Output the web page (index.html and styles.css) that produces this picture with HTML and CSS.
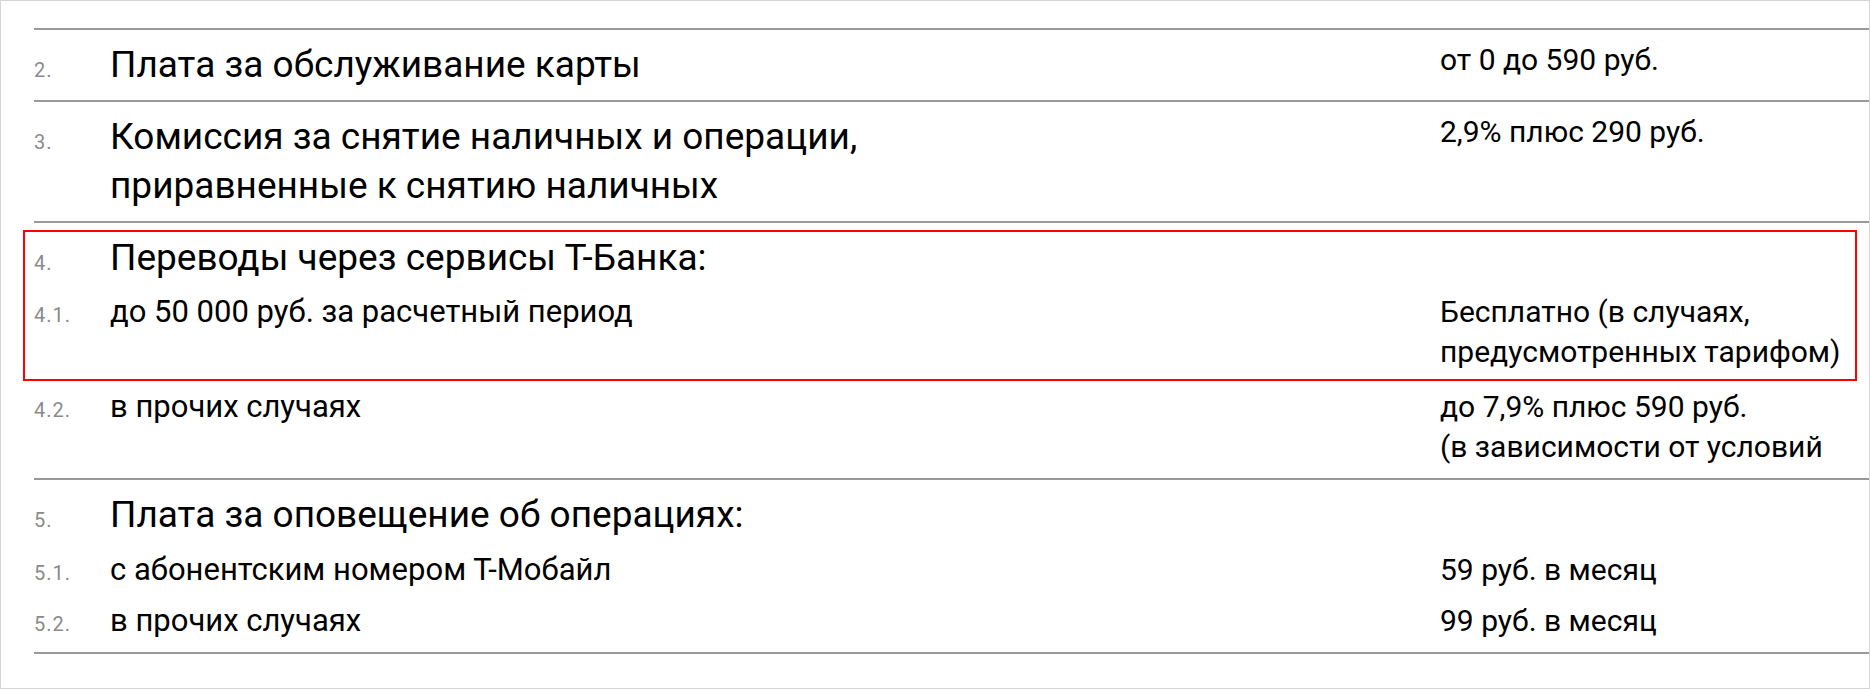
FILE: index.html
```html
<!DOCTYPE html>
<html lang="ru">
<head>
<meta charset="utf-8">
<link rel="stylesheet" href="styles.css">
</head>
<body>
<div class="frame">
  <div class="list">
    <section class="sec">
      <div class="row">
        <span class="num">2.</span>
        <span class="title">Плата за обслуживание карты</span>
        <span class="val">от 0 до 590 руб.</span>
      </div>
    </section>
    <section class="sec">
      <div class="row">
        <span class="num">3.</span>
        <span class="title">Комиссия за снятие наличных и операции,<br>приравненные к снятию наличных</span>
        <span class="val">2,9% плюс 290 руб.</span>
      </div>
    </section>
    <section class="sec">
      <div class="highlight">
        <div class="row">
          <span class="num">4.</span>
          <span class="title">Переводы через сервисы Т-Банка:</span>
          <span class="val"></span>
        </div>
        <div class="row sub">
          <span class="num">4.1.</span>
          <span class="text">до 50 000 руб. за расчетный период</span>
          <span class="val">Бесплатно (в случаях,<br>предусмотренных тарифом)</span>
        </div>
      </div>
      <div class="row sub">
        <span class="num">4.2.</span>
        <span class="text">в прочих случаях</span>
        <span class="val">до 7,9% плюс 590 руб.<br>(в зависимости от условий</span>
      </div>
    </section>
    <section class="sec">
      <div class="row">
        <span class="num">5.</span>
        <span class="title">Плата за оповещение об операциях:</span>
        <span class="val"></span>
      </div>
      <div class="row sub">
        <span class="num">5.1.</span>
        <span class="text">с абонентским номером Т-Мобайл</span>
        <span class="val">59 руб. в месяц</span>
      </div>
      <div class="row sub">
        <span class="num">5.2.</span>
        <span class="text">в прочих случаях</span>
        <span class="val">99 руб. в месяц</span>
      </div>
    </section>
  </div>
</div>
</body>
</html>
```
FILE: styles.css
```css
* { box-sizing: border-box; }
html, body { margin: 0; padding: 0; background: #fff; }
body { font-family: Roboto, "Noto Sans", sans-serif; color: #000; }

.frame {
  width: 1870px;
  height: 689px;
  border: 1px solid #d4d4d4;
  padding: 27px 0 0 33px;
  overflow: hidden;
}

.list {
  border-bottom: 2px solid #999;
}

.sec {
  border-top: 2px solid #999;
  padding: 10px 0 11px;
  display: flex;
  flex-direction: column;
  gap: 11px;
}

.highlight {
  position: relative;
  display: flex;
  flex-direction: column;
  gap: 10px;
  margin-bottom: 4px;
}
.highlight::after {
  content: "";
  position: absolute;
  top: -3px;
  bottom: -9px;
  left: -11px;
  right: 12px;
  border: 2px solid #ff0000;
  pointer-events: none;
}

.row {
  display: grid;
  grid-template-columns: 76px 1fr 429px;
  align-items: baseline;
}

.num {
  font-size: 20px;
  color: #8a8a8a;
  letter-spacing: 1px;
}

.title {
  font-size: 37px;
  line-height: 49px;
}

.text {
  font-size: 31px;
  line-height: 40px;
}

.val {
  align-self: start;
  font-size: 30px;
  line-height: 40px;
  white-space: nowrap;
}

.sub .val { align-self: baseline; }
```
